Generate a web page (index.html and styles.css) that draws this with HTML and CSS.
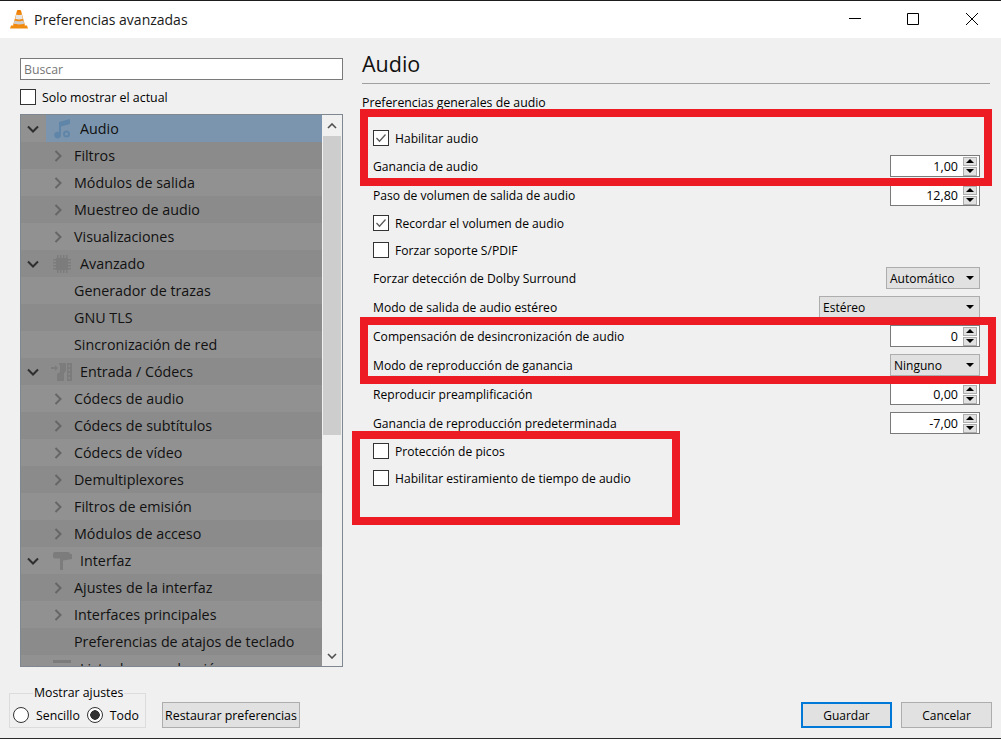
FILE: index.html
```html
<!DOCTYPE html>
<html lang="es">
<head>
<meta charset="utf-8">
<title>Preferencias avanzadas</title>
<link rel="stylesheet" href="styles.css">
</head>
<body>
<div class="app">
  <header class="titlebar">
    <svg class="cone" viewBox="0 0 18 21" width="18" height="21">
      <path d="M1 17.500h16l1 3H0z" fill="#f08c10"/>
      <path d="M3 17.500 7 2.500h4l4 15c-2 1.400-10 1.400-12 0z" fill="#f28a12"/>
      <path d="M6.200 6.500c1.400.7 4.200.7 5.600 0l1 4.200c-2 1-5.600 1-7.600 0z" fill="#e6e6e6"/>
      <path d="M7.500 2h3l.6 2.200c-1 .5-3.200.5-4.200 0z" fill="#ef7d00"/>
      <path d="M4.600 12.500c2 1 6.800 1 8.800 0l.8 3c-2.400 1.200-8 1.200-10.400 0z" fill="#cfcfcf"/>
    </svg>
    <span class="title">Preferencias avanzadas</span>
    <div class="winbtns">
      <svg class="winbtn" viewBox="0 0 12 12" width="12" height="12"><path d="M0 5.500h12" stroke="#000" fill="none"/></svg>
      <svg class="winbtn" viewBox="0 0 12 12" width="12" height="12"><path d="M.5.500h11v11H.5z" stroke="#000" fill="none"/></svg>
      <svg class="winbtn" viewBox="0 0 12 12" width="12" height="12"><path d="M0 0l12 12M12 0 0 12" stroke="#000" fill="none"/></svg>
    </div>
  </header>

  <main class="main">
    <aside class="left">
      <div class="search">Buscar</div>
      <label class="check left-check"><span class="box"></span><span>Solo mostrar el actual</span></label>
      <div class="tree">
        <ul class="rows">
          <li class="row top selected">
            <span class="expander"><svg class="chev" viewBox="0 0 12 8" width="12" height="8"><path d="M1 1.500l5 5 5-5" /></svg></span>
            <span class="sel">
              <svg class="ticon note" viewBox="0 0 18 20" width="18" height="20"><path d="M6 3 17 0v5L8 7.500V16a3.400 3.400 0 1 1-2-3zM13.500 11.500a3.500 3.500 0 1 1 0 7 3.500 3.500 0 0 1 0-7zm0 2a1.500 1.500 0 1 0 0 3 1.500 1.500 0 0 0 0-3z"/></svg>
              <span>Audio</span>
            </span>
          </li>
          <li class="row child"><svg class="arrow" viewBox="0 0 8 12" width="8" height="12"><path d="M1.500 1l5 5-5 5"/></svg><span>Filtros</span></li>
          <li class="row child"><svg class="arrow" viewBox="0 0 8 12" width="8" height="12"><path d="M1.500 1l5 5-5 5"/></svg><span>Módulos de salida</span></li>
          <li class="row child"><svg class="arrow" viewBox="0 0 8 12" width="8" height="12"><path d="M1.500 1l5 5-5 5"/></svg><span>Muestreo de audio</span></li>
          <li class="row child"><svg class="arrow" viewBox="0 0 8 12" width="8" height="12"><path d="M1.500 1l5 5-5 5"/></svg><span>Visualizaciones</span></li>
          <li class="row top">
            <span class="expander"><svg class="chev" viewBox="0 0 12 8" width="12" height="8"><path d="M1 1.500l5 5 5-5" /></svg></span>
            <svg class="ticon" viewBox="0 0 18 18" width="18" height="18"><path d="M3 3h12v12H3zM4 0h1.500v3H4zM7 0h1.500v3H7zM10 0h1.500v3H10zM13 0h1.500v3H13zM4 15h1.500v3H4zM7 15h1.500v3H7zM10 15h1.500v3H10zM13 15h1.500v3H13zM0 4h3v1.500H0zM0 7h3v1.500H0zM0 10h3v1.500H0zM0 13h3v1.500H0zM15 4h3v1.500h-3zM15 7h3v1.500h-3zM15 10h3v1.500h-3zM15 13h3v1.500h-3z"/></svg>
            <span>Avanzado</span>
          </li>
          <li class="row child plain"><span>Generador de trazas</span></li>
          <li class="row child plain"><span>GNU TLS</span></li>
          <li class="row child plain"><span>Sincronización de red</span></li>
          <li class="row top">
            <span class="expander"><svg class="chev" viewBox="0 0 12 8" width="12" height="8"><path d="M1 1.500l5 5 5-5" /></svg></span>
            <svg class="ticon wide" viewBox="0 0 21 18" width="21" height="18"><path fill-rule="evenodd" d="M0 4h4V2l3 3-3 3V6H0zM8 0h7v8l-2 2v8H6v-7l3-2V2H8zM16 0h5v18h-5zm1.500 2v2H19V2zm0 4v2H19V6zm0 4v2H19v-2zm0 4v2H19v-2z"/></svg>
            <span>Entrada / Códecs</span>
          </li>
          <li class="row child"><svg class="arrow" viewBox="0 0 8 12" width="8" height="12"><path d="M1.500 1l5 5-5 5"/></svg><span>Códecs de audio</span></li>
          <li class="row child"><svg class="arrow" viewBox="0 0 8 12" width="8" height="12"><path d="M1.500 1l5 5-5 5"/></svg><span>Códecs de subtítulos</span></li>
          <li class="row child"><svg class="arrow" viewBox="0 0 8 12" width="8" height="12"><path d="M1.500 1l5 5-5 5"/></svg><span>Códecs de vídeo</span></li>
          <li class="row child"><svg class="arrow" viewBox="0 0 8 12" width="8" height="12"><path d="M1.500 1l5 5-5 5"/></svg><span>Demultiplexores</span></li>
          <li class="row child"><svg class="arrow" viewBox="0 0 8 12" width="8" height="12"><path d="M1.500 1l5 5-5 5"/></svg><span>Filtros de emisión</span></li>
          <li class="row child"><svg class="arrow" viewBox="0 0 8 12" width="8" height="12"><path d="M1.500 1l5 5-5 5"/></svg><span>Módulos de acceso</span></li>
          <li class="row top">
            <span class="expander"><svg class="chev" viewBox="0 0 12 8" width="12" height="8"><path d="M1 1.500l5 5 5-5" /></svg></span>
            <svg class="ticon roller" viewBox="0 0 19 18" width="19" height="18"><path d="M2 0h13a2 2 0 0 1 2 2h2v5l-9 1.500V18H7V6.500l10-1.500V4.500a2 2 0 0 1-2 2H2a2 2 0 0 1-2-2V2a2 2 0 0 1 2-2z"/></svg>
            <span>Interfaz</span>
          </li>
          <li class="row child"><svg class="arrow" viewBox="0 0 8 12" width="8" height="12"><path d="M1.500 1l5 5-5 5"/></svg><span>Ajustes de la interfaz</span></li>
          <li class="row child"><svg class="arrow" viewBox="0 0 8 12" width="8" height="12"><path d="M1.500 1l5 5-5 5"/></svg><span>Interfaces principales</span></li>
          <li class="row child plain"><span>Preferencias de atajos de teclado</span></li>
          <li class="row top">
            <span class="expander"><svg class="chev" viewBox="0 0 12 8" width="12" height="8"><path d="M1 1.500l5 5 5-5" /></svg></span>
            <svg class="ticon" viewBox="0 0 18 18" width="18" height="18"><path d="M0 0h18v3H0zM0 6h18v3H0zM0 12h18v3H0z"/></svg>
            <span>Lista de reproducción</span>
          </li>
        </ul>
        <div class="scrollbar">
          <span class="sb-btn"><svg viewBox="0 0 10 6" width="10" height="6"><path d="M1 5l4-4 4 4"/></svg></span>
          <span class="thumb"></span>
          <span class="sb-rest"></span>
          <span class="sb-btn"><svg viewBox="0 0 10 6" width="10" height="6"><path d="M1 1l4 4 4-4"/></svg></span>
        </div>
      </div>
    </aside>

    <section class="right">
      <h1 class="heading">Audio</h1>
      <p class="sub">Preferencias generales de audio</p>
      <div class="opts">
        <label class="check opt"><span class="box"><svg viewBox="0 0 14 14" width="14" height="14"><path d="M2.500 7l3 3.200 6-6.700" fill="none" stroke="#5a5a5a" stroke-width="1.300"/></svg></span><span>Habilitar audio</span></label>
        <div class="field"><span>Ganancia de audio</span><div class="spin"><span class="val">1,00</span><span class="spin-btns"><i class="up"></i><i class="down"></i></span></div></div>
        <div class="field"><span>Paso de volumen de salida de audio</span><div class="spin"><span class="val">12,80</span><span class="spin-btns"><i class="up"></i><i class="down"></i></span></div></div>
        <label class="check opt"><span class="box"><svg viewBox="0 0 14 14" width="14" height="14"><path d="M2.500 7l3 3.200 6-6.700" fill="none" stroke="#5a5a5a" stroke-width="1.300"/></svg></span><span>Recordar el volumen de audio</span></label>
        <label class="check opt next"><span class="box"></span><span>Forzar soporte S/PDIF</span></label>
        <div class="field"><span>Forzar detección de Dolby Surround</span><div class="combo w94"><span>Automático</span><i class="caret"></i></div></div>
        <div class="field"><span>Modo de salida de audio estéreo</span><div class="combo w161"><span>Estéreo</span><i class="caret"></i></div></div>
        <div class="field"><span>Compensación de desincronización de audio</span><div class="spin"><span class="val">0</span><span class="spin-btns"><i class="up"></i><i class="down"></i></span></div></div>
        <div class="field"><span>Modo de reproducción de ganancia</span><div class="combo w90"><span>Ninguno</span><i class="caret"></i></div></div>
        <div class="field"><span>Reproducir preamplificación</span><div class="spin"><span class="val">0,00</span><span class="spin-btns"><i class="up"></i><i class="down"></i></span></div></div>
        <div class="field"><span>Ganancia de reproducción predeterminada</span><div class="spin"><span class="val">-7,00</span><span class="spin-btns"><i class="up"></i><i class="down"></i></span></div></div>
        <label class="check opt"><span class="box"></span><span>Protección de picos</span></label>
        <label class="check opt next"><span class="box"></span><span>Habilitar estiramiento de tiempo de audio</span></label>
      </div>
    </section>
  </main>

  <footer class="footer">
    <fieldset class="group">
      <legend>Mostrar ajustes</legend>
      <span class="radio"></span><span class="radio-label">Sencillo</span>
      <span class="radio on"></span><span class="radio-label">Todo</span>
    </fieldset>
    <button class="btn restore">Restaurar preferencias</button>
    <button class="btn action primary">Guardar</button>
    <button class="btn action">Cancelar</button>
  </footer>

  <div class="mark mark-1"></div>
  <div class="mark mark-2"></div>
  <div class="mark mark-3"></div>
</div>
</body>
</html>
```

FILE: styles.css
```css
* { box-sizing: border-box; }
html, body { margin: 0; padding: 0; }
body { background: #f0f0f0; }
.app {
  position: relative;
  width: 1001px;
  height: 739px;
  overflow: hidden;
  background: #f0f0f0;
  border-top: 1px solid #1c1c1c;
  border-bottom: 1px solid #2a2a2a;
  font-family: "Open Sans", "Noto Sans", sans-serif;
  font-size: 12px;
  color: #000;
}
.titlebar {
  height: 37px;
  background: #fff;
  display: flex;
  align-items: center;
  padding-left: 10px;
}
.cone { flex: none; margin-top: -2px; }
.title { margin-left: 6px; font-size: 14px; color: #1a1a1a; }
.winbtns {
  margin-left: auto;
  margin-top: -1px;
  display: flex;
  gap: 46px;
  padding-right: 23px;
}
.winbtn:last-child { margin-left: 1px; }
.main { height: 647px; display: flex; }
.left { width: 343px; padding-left: 20px; flex: none; }
.search {
  margin-top: 20px;
  height: 22px;
  background: #fff;
  border: 1px solid #7a7a7a;
  line-height: 22px;
  padding-left: 3px;
  color: #767676;
  font-size: 12.300px;
}
.check { display: flex; align-items: center; height: 16px; }
.box {
  flex: none;
  width: 16px;
  height: 16px;
  background: #fff;
  border: 1px solid #333;
  display: block;
  margin-right: 6px;
}
.box svg { display: block; }
.left-check { margin-top: 9px; font-size: 12.400px; }
.tree {
  margin-top: 9px;
  height: 553px;
  border: 1px solid #7f8790;
  display: flex;
  background: #f0f0f0;
}
.rows {
  list-style: none;
  margin: 0;
  padding: 0;
  width: 301px;
  overflow: hidden;
  font-size: 14.300px;
  color: #111;
}
.row {
  height: 27px;
  display: flex;
  align-items: center;
  background: #919191;
  white-space: nowrap;
}
.row:nth-child(even) { background: #8b8b8b; }
.row.top { padding-left: 6px; }
.expander { width: 19px; display: flex; flex: none; }
.chev { fill: none; stroke: #2e2e2e; stroke-width: 2; display: block; }
.ticon { fill: #7c7c7c; margin-left: 7px; flex: none; margin-right: 9px; }
.ticon.wide { margin-left: 5px; margin-right: 8px; }
.ticon.roller { margin-right: 8px; }
.selected { padding: 0 0 0 6px; }
.sel {
  flex: 1;
  align-self: stretch;
  background: #7b95ae;
  display: flex;
  align-items: center;
}
.note { fill: #5f85a8; }
.child { padding-left: 33px; }
.child.plain { padding-left: 53px; }
.arrow { fill: none; stroke: #666; stroke-width: 2; margin-right: 12px; flex: none; }
.scrollbar { flex: 1; display: flex; flex-direction: column; }
.sb-btn { height: 21px; display: flex; align-items: center; justify-content: center; flex: none; }
.sb-btn svg { fill: none; stroke: #505050; stroke-width: 1.600; }
.thumb { height: 299px; background: #cdcdcd; margin: 0 1px; flex: none; }
.sb-rest { flex: 1; }
.right { width: 618px; margin-left: 19px; flex: none; }
.heading {
  margin: 0 -10px 0 0;
  height: 46px;
  border-bottom: 1px solid #a0a0a0;
  font-weight: 400;
  font-size: 21.500px;
  line-height: 52px;
  color: #111;
}
.sub { margin: 10px 0 0; line-height: 17px; font-size: 12.300px; }
.opts { padding-left: 11px; padding-top: 10px; font-size: 12.100px; }
.opt { margin-top: 9px; }
.opt.next { margin-top: 11px; }
.field {
  height: 22px;
  margin-top: 7px;
  display: flex;
  align-items: center;
  justify-content: space-between;
}
.opt + .field { margin-top: 9px; }
.spin {
  width: 90px;
  height: 22px;
  background: #fff;
  border: 1px solid #7a7a7a;
  display: flex;
  align-items: center;
  justify-content: flex-end;
  padding-right: 1px;
  font-size: 12.500px;
}
.val { margin-right: 5px; }
.spin-btns {
  width: 14px;
  display: flex;
  flex-direction: column;
  gap: 1px;
  margin-right: 1px;
}
.spin-btns i {
  height: 9px;
  background: #e1e1e1;
  border: 1px solid #adadad;
  display: flex;
  align-items: center;
  justify-content: center;
}
.spin-btns i::after {
  content: "";
  border-left: 4px solid transparent;
  border-right: 4px solid transparent;
}
.spin-btns .up::after { border-bottom: 4px solid #000; }
.spin-btns .down::after { border-top: 4px solid #000; }
.combo {
  height: 22px;
  background: #e1e1e1;
  border: 1px solid #adadad;
  display: flex;
  align-items: center;
  justify-content: space-between;
  padding: 0 5px 0 3px;
  font-size: 12px;
}
.w94 { width: 94px; }
.w161 { width: 161px; }
.w90 { width: 90px; }
.caret {
  border-left: 4px solid transparent;
  border-right: 4px solid transparent;
  border-top: 4px solid #000;
}
.footer {
  height: 53px;
  padding: 0 9px 10px;
  display: flex;
  align-items: flex-end;
  font-size: 12.300px;
}
.group {
  margin: 0;
  width: 137px;
  min-width: 0;
  height: 43px;
  flex: none;
  padding: 2px 0 0 3px;
  border: 1px solid #dcdcdc;
  display: flex;
  align-items: center;
}
.group legend { margin-left: 20px; padding: 0 1px; line-height: 16px; }
.radio {
  width: 16px;
  height: 16px;
  border: 1px solid #333;
  border-radius: 50%;
  background: #fff;
  flex: none;
  margin-right: 7px;
}
.radio.on {
  background: radial-gradient(circle, #333 0 4.500px, #fff 5px);
}
.radio-label { margin-right: 7px; }
.radio-label:last-child { margin-right: 0; }
.btn {
  height: 26px;
  background: #e1e1e1;
  border: 1px solid #adadad;
  font: inherit;
  color: #000;
  padding: 0;
}
.restore { margin-left: 16px; width: 138px; font-size: 12.400px; }
.action { width: 91px; margin-left: 9px; font-size: 12px; }
.primary { margin-left: auto; border: 2px solid #0078d7; }
.mark { position: absolute; border: 8px solid #ed1c24; pointer-events: none; }
.mark-1 { left: 360px; top: 108px; width: 632px; height: 77px; }
.mark-2 { left: 360px; top: 316px; width: 636px; height: 67px; }
.mark-3 { left: 352px; top: 430px; width: 328px; height: 94px; }
```
